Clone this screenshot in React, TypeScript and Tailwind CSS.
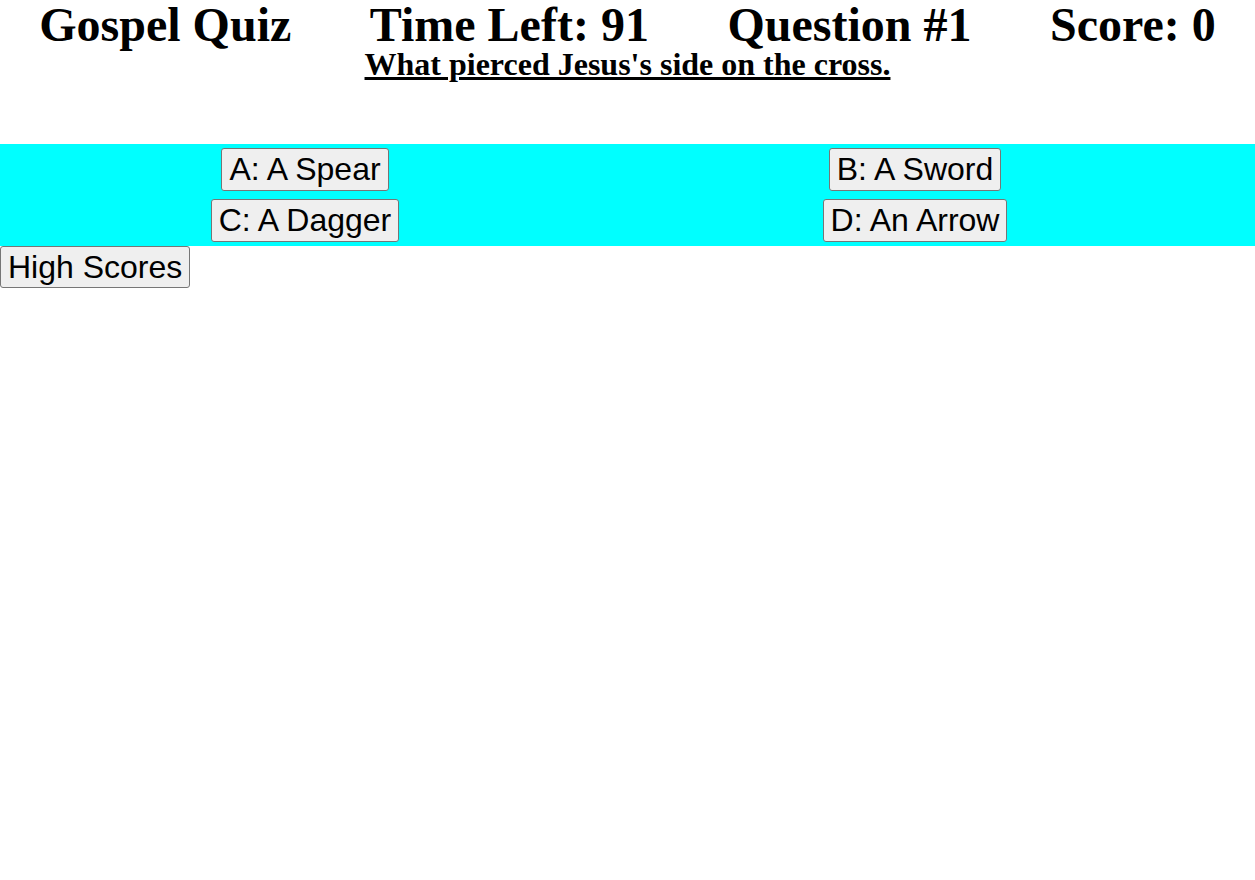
const serif = { fontFamily: '"Liberation Serif", "Times New Roman", serif' };

const answers = [
  ['A: A Spear', 'B: A Sword'],
  ['C: A Dagger', 'D: An Arrow'],
];

const btn =
  "rounded-[3px] border border-[#767676] bg-[#efefef] px-[7px] py-[2px] text-[32px] leading-[36.8px] text-black font-['Liberation_Sans',Arial,sans-serif]";

export default function App() {
  return (
    <div className="min-h-screen bg-white text-black">
      <header className="flex h-12 justify-around pt-px text-[48px] font-bold leading-[48px]" style={serif}>
        <span>Gospel Quiz</span>
        <span>Time Left: 91</span>
        <span>Question #1</span>
        <span>Score: 0</span>
      </header>
      <h2 className="text-center text-[32px] font-bold leading-[32px] underline" style={serif}>
        What pierced Jesus's side on the cross.
      </h2>
      <div className="mt-[64px] flex flex-col gap-[8px] bg-[#00ffff] py-[4px]">
        {answers.map((row) => (
          <div key={row[0]} className="grid grid-cols-[610px_610px] justify-items-center">
            {row.map((a) => (
              <button key={a} className={btn}>
                {a}
              </button>
            ))}
          </div>
        ))}
      </div>
      <button className={btn}>High Scores</button>
    </div>
  );
}
